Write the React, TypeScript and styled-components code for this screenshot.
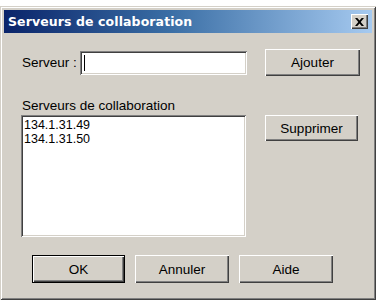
import styled, { createGlobalStyle } from 'styled-components';

const Face = '#D4D0C8';

const GlobalStyle = createGlobalStyle`
  html, body {
    margin: 0;
    padding: 0;
    background: #ffffff;
  }
  body {
    font-family: "Liberation Sans", Arial, sans-serif;
    font-size: 13.5px;
    color: #000000;
  }
`

const servers = ['134.1.31.49', '134.1.31.50'];

export default function App() {
  return (
    <>
      <GlobalStyle />
      <Window>
        <TitleBar>
          <Title>Serveurs de collaboration</Title>
          <CloseButton aria-label="Fermer">
            <svg width="9" height="8" viewBox="0 0 9 8">
              <path d="M0 0h2.3l2.2 2.6L6.7 0H9L5.7 4 9 8H6.7L4.5 5.4 2.3 8H0l3.3-4z" fill="#000" />
            </svg>
          </CloseButton>
        </TitleBar>
        <Body>
          <TopRow>
            <FieldLabel>Serveur :</FieldLabel>
            <TextBox>
              <Caret />
            </TextBox>
            <Spacer />
            <Button $width={95} $height={27}>Ajouter</Button>
          </TopRow>
          <ListLabel>Serveurs de collaboration</ListLabel>
          <ListRow>
            <ListBox>
              {servers.map(s => (
                <ListItem key={s}>{s}</ListItem>
              ))}
            </ListBox>
            <Button $width={93} $height={26}>Supprimer</Button>
          </ListRow>
          <Footer>
            <Button $width={93} $height={28} $default>OK</Button>
            <Button $width={94} $height={28}>Annuler</Button>
            <Button $width={94} $height={28}>Aide</Button>
          </Footer>
        </Body>
      </Window>
    </>
  );
}

const Window = styled.div`
  margin-top: 6px;
  width: 376px;
  height: 294px;
  box-sizing: border-box;
  background: ${Face};
  padding: 4px;
  display: flex;
  flex-direction: column;
  box-shadow:
    inset 1px 1px 0 ${Face},
    inset -1px -1px 0 #404040,
    inset 2px 2px 0 #ffffff,
    inset -2px -2px 0 #808080;
`

const TitleBar = styled.div`
  height: 23px;
  display: flex;
  align-items: center;
  padding: 0 4px 0 4px;
  background: linear-gradient(to right, #0A246A 0%, #3A6EA5 45%, #A6CAF0 100%);
`

const Title = styled.span`
  flex: 1;
  color: #ffffff;
  font-family: "DejaVu Sans", Verdana, sans-serif;
  font-weight: bold;
  font-size: 12.5px;
  letter-spacing: 0.1px;
`

const CloseButton = styled.button`
  width: 17px;
  height: 15px;
  padding: 0;
  border: none;
  background: ${Face};
  display: flex;
  align-items: center;
  justify-content: center;
  box-shadow:
    inset 1px 1px 0 #ffffff,
    inset -1px -1px 0 #404040,
    inset -2px -2px 0 #808080;
`

const Body = styled.div`
  flex: 1;
  display: flex;
  flex-direction: column;
  padding: 16px 12px 0 17px;
`

const TopRow = styled.div`
  display: flex;
  align-items: center;
  height: 27px;
`

const FieldLabel = styled.span`
  width: 59px;
  padding-left: 1px;
  box-sizing: border-box;
  white-space: nowrap;
`

const sunken = `
  background: #ffffff;
  box-sizing: border-box;
  box-shadow:
    inset 1px 1px 0 #808080,
    inset -1px -1px 0 #ffffff,
    inset 2px 2px 0 #404040,
    inset -2px -2px 0 ${Face};
`

const TextBox = styled.div`
  ${sunken}
  width: 167px;
  height: 24px;
  position: relative;
`

const Caret = styled.span`
  position: absolute;
  left: 4px;
  top: 4px;
  width: 1px;
  height: 16px;
  background: #000000;
`

const Spacer = styled.div`
  flex: 1;
`

const Button = styled.button<{ $width: number; $height: number; $default?: boolean }>`
  width: ${p => p.$width}px;
  height: ${p => p.$height}px;
  padding: 0;
  border: none;
  background: ${Face};
  font-family: "Liberation Sans", Arial, sans-serif;
  font-size: 13.5px;
  color: #000000;
  box-shadow: ${p => p.$default
    ? `inset 0 0 0 1px #000000, inset 2px 2px 0 #ffffff, inset -2px -2px 0 #404040, inset -3px -3px 0 #808080`
    : `inset 1px 1px 0 #ffffff, inset -1px -1px 0 #404040, inset -2px -2px 0 #808080`};
`

const ListLabel = styled.div`
  margin-top: 22px;
  padding-left: 1px;
  line-height: 15px;
`

const ListRow = styled.div`
  margin-top: 2px;
  display: flex;
  align-items: flex-start;
  justify-content: space-between;
  padding-right: 2px;
`

const ListBox = styled.div`
  ${sunken}
  width: 225px;
  height: 122px;
  padding: 3px 3px;
`

const ListItem = styled.div`
  line-height: 14px;
  font-size: 12.5px;
`

const Footer = styled.div`
  margin-top: 18px;
  display: flex;
  gap: 10px;
  padding-left: 11px;
`
